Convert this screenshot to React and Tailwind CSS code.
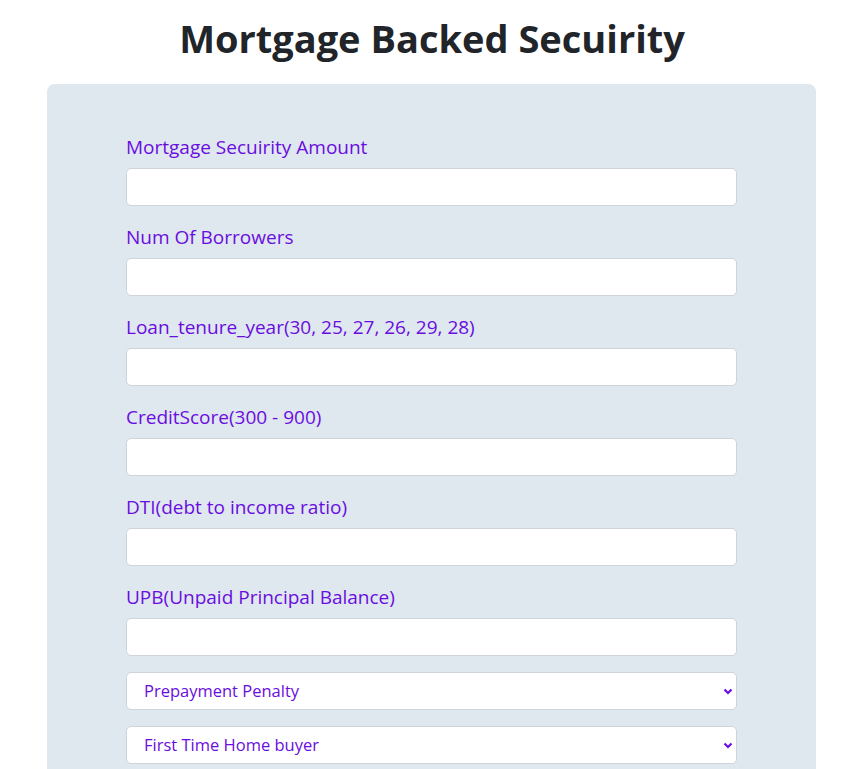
import React from "react";

const font = { fontFamily: '"Segoe UI", "Open Sans", "Noto Sans", sans-serif' };

function Field({ label }) {
  return (
    <div className="mb-[16px]">
      <label className="block text-[19px] leading-[28px] pt-[1px] mb-[7px] text-[#6a0de0]">{label}</label>
      <input className="block w-full h-[38px] bg-white border border-[#ced4da] rounded-[5px] outline-none" />
    </div>
  );
}

function Select({ label }) {
  return (
    <div className="mb-[16px] relative">
      <div className="w-full h-[38px] bg-white border border-[#ced4da] rounded-[5px] flex items-center pl-[17px] pr-[2px] text-[16.5px] text-[#6a0de0]">
        <span className="flex-1 pt-[1px]">{label}</span>
        <svg width="10" height="8" viewBox="0 0 10 8" className="mr-[1px]">
          <path d="M1.5 2.5 L5 6 L8.5 2.5" fill="none" stroke="#6a0de0" strokeWidth="2.2" />
        </svg>
      </div>
    </div>
  );
}

export default function App() {
  return (
    <div className="bg-white min-h-[769px] w-[844px] overflow-hidden" style={font}>
      <h1 className="text-center ml-[20px] pt-[12px] h-[84px] text-[38px] leading-[52px] font-bold text-[#212529]">
        Mortgage Backed Secuirity
      </h1>
      <div className="ml-[47px] w-[769px] bg-[#dfe7ef] rounded-[8px] pt-[48px] px-[79px] pb-[40px]">
        <Field label="Mortgage Secuirity Amount" />
        <Field label="Num Of Borrowers" />
        <Field label="Loan_tenure_year(30, 25, 27, 26, 29, 28)" />
        <Field label="CreditScore(300 - 900)" />
        <Field label="DTI(debt to income ratio)" />
        <Field label="UPB(Unpaid Principal Balance)" />
        <Select label="Prepayment Penalty" />
        <Select label="First Time Home buyer" />
      </div>
    </div>
  );
}
